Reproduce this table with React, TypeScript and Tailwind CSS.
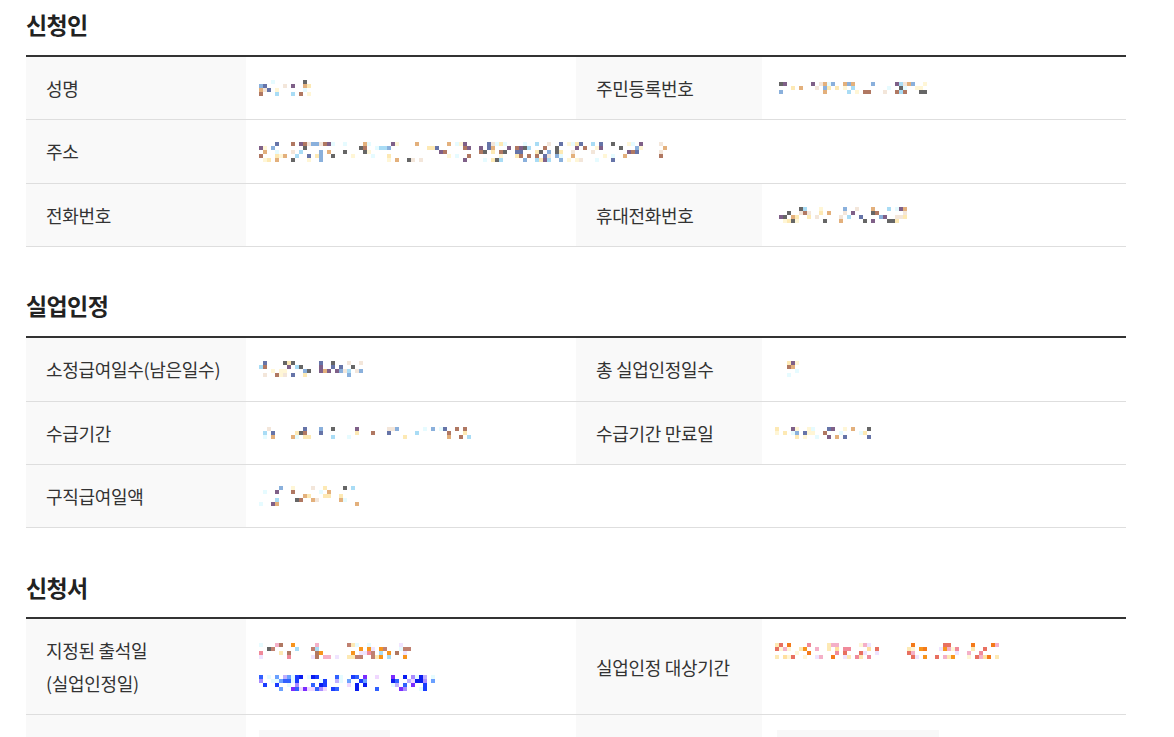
import React from "react";

const MUTED = ["#b07862", "#6674a8", "#666666", "#fde9b4", "#a9dcf5", "#e3b07c", "#e6fbff", "#7f6088", "#8ab0dc", "#f3e6da", "#fff6d6"];
const PINK = ["#666666", "#b07862", "#a9dcf5", "#fde9b4", "#f08a9a", "#f4b0c8", "#f7941d", "#efe4ff", "#e6fbff", "#c08070"];
const BLUE = ["#1a3cff", "#0a1cf0", "#7a2cff", "#a98cff", "#6aa0ff", "#f0d8ff", "#3060ff", "#c0b0ff", "#e6fbff"];
const ORANGE = ["#f47a1a", "#f7941d", "#f08a9a", "#f4b0c8", "#fde9b4", "#ffe0a0", "#efe4ff", "#fff6d6", "#e87060"];

function Mosaic({ seed, cols, rows, palette, density = 0.4 }: { seed: number; cols: number; rows: number; palette: string[]; density?: number }) {
  let s = seed * 9301 + 49297;
  const rnd = () => {
    s = (s * 1103515245 + 12345) % 2147483648;
    return s / 2147483648;
  };
  const cells: React.ReactNode[] = [];
  for (let c = 0; c < cols; c++) {
    const gap = rnd() < 0.18;
    for (let r = 0; r < rows; r++) {
      const v = rnd();
      const pick = rnd();
      if (gap || v > density) continue;
      const color = palette[Math.floor(pick * palette.length) % palette.length];
      cells.push(<rect key={c + "-" + r} x={c * 4} y={r * 4} width={4} height={4} fill={color} />);
    }
  }
  return (
    <svg width={cols * 4} height={rows * 4} className="block shrink-0" shapeRendering="crispEdges">
      {cells}
    </svg>
  );
}

function Label({ children }: { children?: React.ReactNode }) {
  return (
    <div className="flex items-center bg-[#f9f9f9] pl-5 py-[15px] border-b border-[#dedede] text-[#333]">
      <div className="leading-[1.8]">{children}</div>
    </div>
  );
}

function Value({ children, span = false, className = "" }: { children?: React.ReactNode; span?: boolean; className?: string }) {
  return (
    <div className={"py-[15px] pl-[13px] border-b border-[#dedede] " + (span ? "col-span-3 " : "") + className}>
      {children}
    </div>
  );
}

function Line({ children }: { children?: React.ReactNode }) {
  return <div className="h-[32.4px] flex items-center">{children}</div>;
}

function Section({ title, first = false, children }: { title: string; first?: boolean; children: React.ReactNode }) {
  return (
    <section className={first ? "" : "mt-[34px]"}>
      <h2 className="h-[55px] flex items-center text-[23px] font-bold tracking-[-0.6px] text-[#222] pb-[6px]">{title}</h2>
      <div className="grid grid-cols-[220px_330px_186px_1fr] border-t-2 border-[#333]">{children}</div>
    </section>
  );
}

export default function App() {
  return (
    <div className="w-[1174px] h-[737px] overflow-hidden bg-white font-['Noto_Sans_CJK_KR','Malgun_Gothic',sans-serif] text-[18px] tracking-[-0.3px]">
      <div className="ml-[26px] w-[1100px]">
        <Section title="신청인" first>
          <Label>성명</Label>
          <Value><Line><Mosaic seed={3} cols={13} rows={4} palette={MUTED} density={0.5} /></Line></Value>
          <Label>주민등록번호</Label>
          <Value><Line><Mosaic seed={7} cols={38} rows={3} palette={MUTED} density={0.35} /></Line></Value>

          <Label>주소</Label>
          <Value span><Line><Mosaic seed={11} cols={102} rows={5} palette={MUTED} density={0.34} /></Line></Value>

          <Label>전화번호</Label>
          <Value><Line /></Value>
          <Label>휴대전화번호</Label>
          <Value><Line><Mosaic seed={19} cols={33} rows={4} palette={MUTED} density={0.4} /></Line></Value>
        </Section>

        <Section title="실업인정">
          <Label>소정급여일수(남은일수)</Label>
          <Value><Line><Mosaic seed={23} cols={27} rows={4} palette={MUTED} density={0.4} /></Line></Value>
          <Label>총 실업인정일수</Label>
          <Value><Line><Mosaic seed={29} cols={7} rows={4} palette={MUTED} density={0.5} /></Line></Value>

          <Label>수급기간</Label>
          <Value><Line><Mosaic seed={31} cols={54} rows={3} palette={MUTED} density={0.4} /></Line></Value>
          <Label>수급기간 만료일</Label>
          <Value><Line><Mosaic seed={37} cols={24} rows={3} palette={MUTED} density={0.45} /></Line></Value>

          <Label>구직급여일액</Label>
          <Value span><Line><Mosaic seed={41} cols={26} rows={5} palette={MUTED} density={0.3} /></Line></Value>
        </Section>

        <Section title="신청서">
          <Label>
            <div>지정된 출석일</div>
            <div>(실업인정일)</div>
          </Label>
          <Value>
            <Line><Mosaic seed={43} cols={39} rows={4} palette={PINK} density={0.42} /></Line>
            <Line><Mosaic seed={47} cols={45} rows={4} palette={BLUE} density={0.5} /></Line>
          </Value>
          <Label>실업인정 대상기간</Label>
          <Value>
            <Line>
              <div className="flex items-center gap-[28px]">
                <Mosaic seed={53} cols={26} rows={4} palette={ORANGE} density={0.45} />
                <Mosaic seed={59} cols={24} rows={4} palette={ORANGE} density={0.45} />
              </div>
            </Line>
          </Value>

          <Label><div className="h-[32px]" /></Label>
          <Value><div className="h-[32px] w-[131px] bg-[#f8f8f8]" /></Value>
          <Label><div className="h-[32px]" /></Label>
          <Value className="pl-[15px]"><div className="h-[32px] w-[162px] bg-[#f8f8f8]" /></Value>
        </Section>
      </div>
    </div>
  );
}
